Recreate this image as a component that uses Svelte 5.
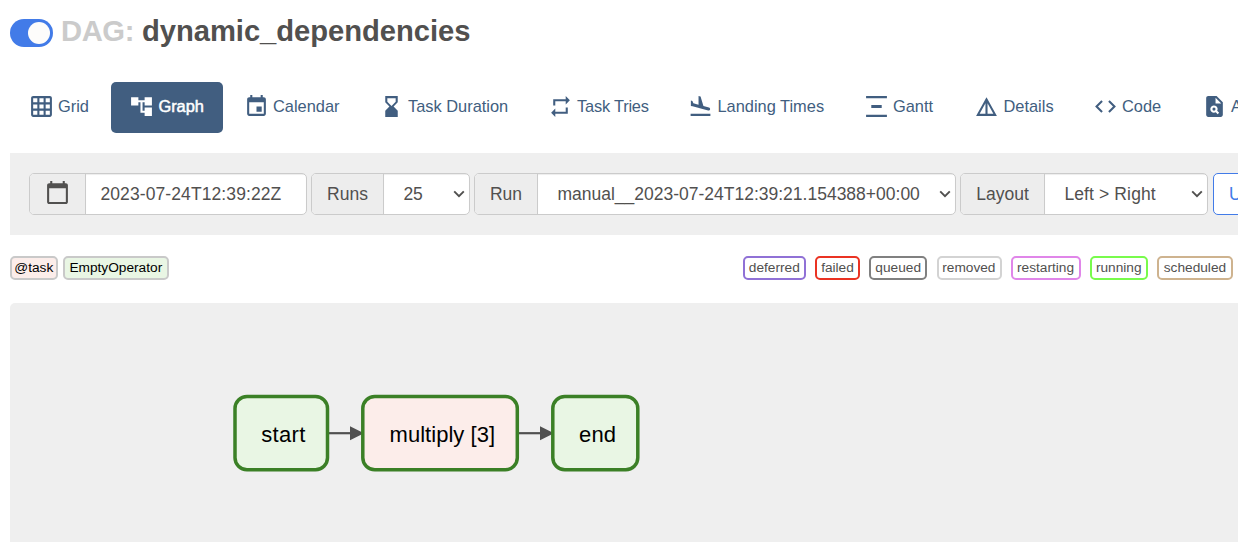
<script>
  const tabs = [
    { label: 'Grid', width: 99, d: 'M20 2H4c-1.1 0-2 .9-2 2v16c0 1.1.9 2 2 2h16c1.1 0 2-.9 2-2V4c0-1.1-.9-2-2-2zM8 20H4v-4h4v4zm0-6H4v-4h4v4zm0-6H4V4h4v4zm6 12h-4v-4h4v4zm0-6h-4v-4h4v4zm0-6h-4V4h4v4zm6 12h-4v-4h4v4zm0-6h-4v-4h4v4zm0-6h-4V4h4v4z' },
    { label: 'Graph', width: 112, active: true, d: 'M22 11V3h-7v3H9V3H2v8h7V8h2v10h4v3h7v-8h-7v3h-2V8h2v3z' },
    { label: 'Calendar', width: 133, d: 'M17 12h-5v5h5v-5zM16 1v2H8V1H6v2H5c-1.11 0-1.99.9-1.99 2L3 19c0 1.1.89 2 2 2h14c1.1 0 2-.9 2-2V5c0-1.1-.9-2-2-2h-1V1h-2zm3 18H5V8h14v11z' },
    { label: 'Task Duration', width: 167, d: 'M18 22l-.01-6L14 12l3.99-4.01L18 2H6v6l4 4-4 3.99V22h12zM8 7.5V4h8v3.5l-4 4-4-4z' },
    { label: 'Task Tries', width: 138.5, spacing: -0.2, d: 'M7 7h10v3l4-4-4-4v3H5v6h2V7zm10 10H7v-3l-4 4 4 4v-3h12v-6h-2v4z' },
    { label: 'Landing Times', width: 173.5, d: 'M2.5 19h19v2h-19zm7.18-5.73l4.35 1.16 5.31 1.42c.8.21 1.62-.26 1.84-1.06.21-.8-.26-1.62-1.06-1.84l-5.31-1.42-2.76-9.02L10.12 2v8.28L5.15 8.95l-.93-2.32-1.45-.39v5.17l1.6.43 5.31 1.43z' },
    { label: 'Gantt', width: 108.5, d: 'M22 2v2H2V2h20zM7 10.5v3h10v-3H7zM2 20v2h20v-2H2z' },
    { label: 'Details', width: 116.5, d: 'M12 3L2 21h20L12 3zm1 5.92L18.6 19H13V8.92zm-2 0V19H5.4L11 8.92z' },
    { label: 'Code', width: 107, d: 'M9.4 16.6L4.8 12l4.6-4.6L8 6l-6 6 6 6 1.4-1.4zm5.2 0l4.6-4.6-4.6-4.6L16 6l6 6-6 6-1.4-1.4z' },
    { label: 'Audit Log', width: 140, d: 'M14 2H6c-1.1 0-2 .9-2 2v16c0 1.1.9 2 2 2h12c1.1 0 2-.9 2-2V8l-6-6zm1.04 17.45l-1.88-1.88c-1.33.71-3.01.53-4.13-.59-1.37-1.37-1.37-3.58 0-4.95s3.58-1.37 4.95 0c1.12 1.12 1.3 2.8.59 4.13l1.88 1.88-1.41 1.41zM13 9V3.5L18.5 9H13zM11.5 13a1.5 1.5 0 1 0 0 3a1.5 1.5 0 1 0 0-3z' }
  ];
  const operators = [
    { label: '@task', width: 48, fill: '#fcedea' },
    { label: 'EmptyOperator', width: 106, fill: '#e9f6e4' }
  ];
  const states = [
    { label: 'deferred', width: 63, color: '#9071d6' },
    { label: 'failed', width: 45, color: '#ea3323' },
    { label: 'queued', width: 58, color: '#808080' },
    { label: 'removed', width: 65, color: '#d3d3d3' },
    { label: 'restarting', width: 70, color: '#e086e9' },
    { label: 'running', width: 58, color: '#78fb4c' },
    { label: 'scheduled', width: 76, color: '#ceb38f' }
  ];
  const selects = [
    { label: 'Runs', value: '25', addon: 72, width: 159 },
    { label: 'Run', value: 'manual__2023-07-24T12:39:21.154388+00:00', addon: 63, width: 482 },
    { label: 'Layout', value: 'Left > Right', addon: 84, width: 248, spacing: 0.12 }
  ];
  const nodes = [
    { label: 'start', x: 225, w: 92.5, fill: '#e9f6e4', tx: 273.3, len: 44 },
    { label: 'multiply [3]', x: 352.8, w: 154.5, fill: '#fcedea', tx: 432.3, len: 105.5 },
    { label: 'end', x: 542.8, w: 85, fill: '#e9f6e4', tx: 587.5, len: 37 }
  ];
  const edges = [[318, 340], [508, 530]];
</script>

<main>
  <header>
    <span class="toggle"><i></i></span>
    <h1><span>DAG:</span> dynamic_dependencies</h1>
  </header>

  <nav>
    {#each tabs as t}
      <a class:active={t.active} style="width:{t.width}px">
        <svg width="25" height="25" viewBox="0 0 24 24"><path fill-rule="evenodd" d={t.d} /></svg>
        <span style="letter-spacing:{t.spacing ?? 0}px">{t.label}</span>
      </a>
    {/each}
  </nav>

  <section class="toolbar">
    <div class="group" style="width:278px">
      <div class="addon" style="width:56px">
        <svg width="25" height="25" viewBox="0 0 24 24"><path d="M20 3h-1V1h-2v2H7V1H5v2H4c-1.1 0-2 .9-2 2v16c0 1.1.9 2 2 2h16c1.1 0 2-.9 2-2V5c0-1.1-.9-2-2-2zm0 18H4V8h16v13z" /></svg>
      </div>
      <div class="field date">2023-07-24T12:39:22Z</div>
    </div>
    {#each selects as s}
      <div class="group" style="width:{s.width}px">
        <div class="addon" style="width:{s.addon}px">{s.label}</div>
        <div class="field">
          <span style="letter-spacing:{s.spacing ?? 0}px">{s.value}</span>
          <svg width="12" height="8" viewBox="0 0 12 8"><path d="M1.2 1.3L6 6.2l4.8-4.9" /></svg>
        </div>
      </div>
    {/each}
    <button>Update</button>
  </section>

  <section class="legend">
    <div class="ops">
      {#each operators as o}
        <span class="badge op" style="width:{o.width}px;background:{o.fill}">{o.label}</span>
      {/each}
    </div>
    <div class="states">
      {#each states as s}
        <span class="badge" style="width:{s.width}px;border-color:{s.color}">{s.label}</span>
      {/each}
    </div>
  </section>

  <section class="graph">
    <svg width="1228" height="239" viewBox="0 0 1228 239">
      {#each edges as [a, b]}
        <path d="M{a} 130.2H{b + 2}" stroke="#505050" stroke-width="2.2" />
        <path d="M{b} 123.3L{b + 14} 130.3L{b} 137.3z" fill="#505050" />
      {/each}
      {#each nodes as n}
        <rect x={n.x} y="93.4" width={n.w} height="73.4" rx="12" fill={n.fill} stroke="#3b8026" stroke-width="3.5" />
        <text x={n.tx} y="139" text-anchor="middle" textLength={n.len}>{n.label}</text>
      {/each}
    </svg>
  </section>
</main>

<style>
  :global(body) { margin: 0; background: #fff; overflow: hidden; }
  main {
    width: 1238px; height: 542px; padding-left: 10px; box-sizing: border-box; overflow: hidden;
    display: flex; flex-direction: column;
    font-family: "Liberation Sans", Arial, sans-serif; color: #51504f;
  }
  svg { display: block; flex: none; }
  header { height: 82px; flex: none; display: flex; align-items: flex-start; }
  .toggle {
    width: 43px; height: 28px; margin-top: 19px; border-radius: 14px; background: #427be8;
    display: flex; align-items: center; justify-content: flex-end; padding-right: 3px; box-sizing: border-box;
  }
  .toggle i { width: 22px; height: 22px; border-radius: 50%; background: #fdfcfb; }
  h1 { margin: 14px 0 0 8px; font-size: 29.2px; line-height: 34px; font-weight: 700; white-space: nowrap; letter-spacing: -0.05px; }
  h1 span { color: #cbcbcb; letter-spacing: -0.4px; }
  nav { display: flex; gap: 2px; height: 51px; flex: none; }
  nav a {
    display: flex; align-items: center; gap: 4px; flex: none; box-sizing: border-box; padding: 0 0 3px 18.6px;
    border-radius: 5px; color: #415e80; font-size: 16.4px; line-height: 20px; white-space: nowrap;
  }
  nav a span { padding-left: 0.4px; margin-top: -1px; }
  nav svg { fill: currentColor; }
  nav .active { background: #415e80; color: #fff; padding-left: 18px; }
  nav .active span { -webkit-text-stroke: 0.5px #fff; }
  .toolbar {
    margin-top: 20px; height: 82px; flex: none; background: #efefef; box-sizing: border-box; padding: 20px 0 20px 19px;
    display: flex; gap: 4px; font-size: 17.5px;
  }
  .group {
    display: flex; flex: none; box-sizing: border-box; border: 1px solid #cbcbcb; border-radius: 5px;
    background: #fff; overflow: hidden;
  }
  .addon {
    display: flex; align-items: center; justify-content: center; flex: none; box-sizing: border-box;
    background: #ededed; border-right: 1px solid #cbcbcb;
  }
  .addon svg { fill: #51504f; margin-bottom: 3px; }
  .field {
    flex: 1; display: flex; align-items: center; justify-content: space-between; padding: 0 4px 0 19.4px;
    white-space: nowrap; box-shadow: inset 0 1px 1px rgba(0, 0, 0, 0.075);
  }
  .field svg path { fill: none; stroke: #51504f; stroke-width: 1.9; }
  .date { padding-left: 14.4px; letter-spacing: 0.1px; }
  button {
    flex: none; width: 90px; margin-left: 1px; padding: 0 0 0 15px; text-align: left; border: 1px solid #427be8;
    border-radius: 5px; background: #fff; color: #427be8; font: inherit;
  }
  .legend { height: 68px; flex: none; display: flex; padding-top: 21px; box-sizing: border-box; }
  .ops { display: flex; gap: 5px; width: 733px; flex: none; }
  .states { display: flex; gap: 9.2px; }
  .badge {
    height: 24px; flex: none; box-sizing: border-box; border: 2px solid #c9c9c9; border-radius: 5px;
    font-size: 13.7px; line-height: 19px; text-align: center; white-space: nowrap; padding-right: 0.4px;
  }
  .op { color: #000; }
  .graph { flex: 1; background: #efefef; border-radius: 5px 0 0 0; }
  text { font-size: 22px; fill: #000; }
</style>
